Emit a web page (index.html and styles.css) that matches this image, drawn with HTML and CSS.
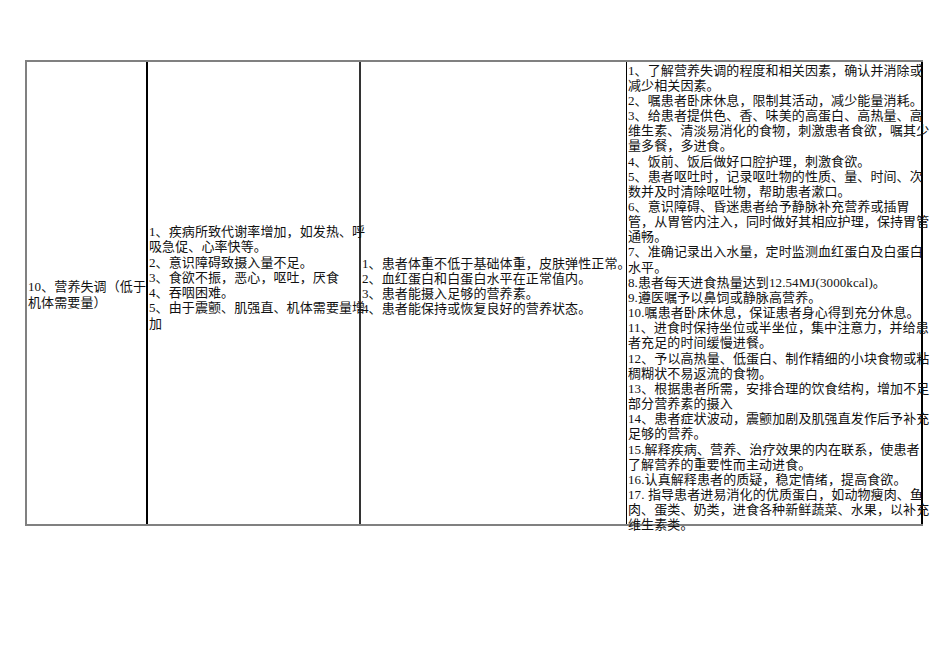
FILE: index.html
```html
<!DOCTYPE html>
<html lang="zh-CN">
<head>
<meta charset="utf-8">
<title>护理计划</title>
<link rel="stylesheet" href="styles.css">
</head>
<body>
<div class="sheet">
  <div class="table">
    <div class="cell c1">
      <div class="txt t1">10、营养失调（低于机体需要量）</div>
    </div>
    <div class="cell c2">
      <div class="txt t2">1、疾病所致代谢率增加，如发热、呼吸急促、心率快等。<br>2、意识障碍致摄入量不足。<br>3、食欲不振，恶心，呕吐，厌食<br>4、吞咽困难。<br>5、由于震颤、肌强直、机体需要量增加</div>
    </div>
    <div class="cell c3">
      <div class="txt t3">1、患者体重不低于基础体重，皮肤弹性正常。<br>2、血红蛋白和白蛋白水平在正常值内。<br>3、患者能摄入足够的营养素。<br>4、患者能保持或恢复良好的营养状态。</div>
    </div>
    <div class="cell c4">
      <div class="txt t4">1、了解营养失调的程度和相关因素，确认并消除或减少相关因素。<br>2、嘱患者卧床休息，限制其活动，减少能量消耗。<br>3、给患者提供色、香、味美的高蛋白、高热量、高维生素、清淡易消化的食物，刺激患者食欲，嘱其少量多餐，多进食。<br>4、饭前、饭后做好口腔护理，刺激食欲。<br>5、患者呕吐时，记录呕吐物的性质、量、时间、次数并及时清除呕吐物，帮助患者漱口。<br>6、意识障碍、昏迷患者给予静脉补充营养或插胃管，从胃管内注入，同时做好其相应护理，保持胃管通畅。<br>7、准确记录出入水量，定时监测血红蛋白及白蛋白水平。<br>8.患者每天进食热量达到12.54MJ(3000kcal)。<br>9.遵医嘱予以鼻饲或静脉高营养。<br>10.嘱患者卧床休息，保证患者身心得到充分休息。<br>11、进食时保持坐位或半坐位，集中注意力，并给患者充足的时间缓慢进餐。<br>12、予以高热量、低蛋白、制作精细的小块食物或粘稠糊状不易返流的食物。<br>13、根据患者所需，安排合理的饮食结构，增加不足部分营养素的摄入<br>14、患者症状波动，震颤加剧及肌强直发作后予补充足够的营养。<br>15.解释疾病、营养、治疗效果的内在联系，使患者了解营养的重要性而主动进食。<br>16.认真解释患者的质疑，稳定情绪，提高食欲。<br>17. 指导患者进易消化的优质蛋白，如动物瘦肉、鱼肉、蛋类、奶类，进食各种新鲜蔬菜、水果，以补充维生素类。</div>
    </div>
  </div>
</div>
</body>
</html>
```

FILE: styles.css
```css
html, body {
  margin: 0;
  padding: 0;
  background: #ffffff;
}

body {
  font-family: "Liberation Serif", "Noto Sans CJK SC", serif;
  font-size: 13px;
  line-height: 15.2px;
  letter-spacing: 0.1px;
  color: #111111;
}

.sheet {
  padding-top: 60px;
  padding-left: 25px;
  padding-bottom: 120px;
}

.table {
  display: grid;
  grid-template-columns: 121px 213px 266px 296px;
  grid-template-rows: 462px;
  width: max-content;
  border-top: 2px solid #808080;
  border-left: 2px solid #808080;
  border-bottom: 2px solid #808080;
}

.cell {
  min-width: 0;
  min-height: 0;
  display: flex;
  align-items: center;
  overflow: visible;
}

.c1 { border-right: 2px solid #000000; }
.c2 { border-right: 2px solid #333333; }
.c3 { border-right: 1px solid #000000; }
.c4 {
  border-right: 2px solid #000000;
  align-items: flex-start;
}

.txt {
  flex: none;
  padding-left: 1px;
}

.t1 {
  width: 118px;
  padding-top: 3px;
}

.t2 {
  width: 220px;
  padding-bottom: 31px;
}

.t3 {
  width: 300px;
  padding-bottom: 14px;
}

.t4 {
  width: 304px;
  padding-top: 0.6px;
  line-height: 15.15px;
}
```
